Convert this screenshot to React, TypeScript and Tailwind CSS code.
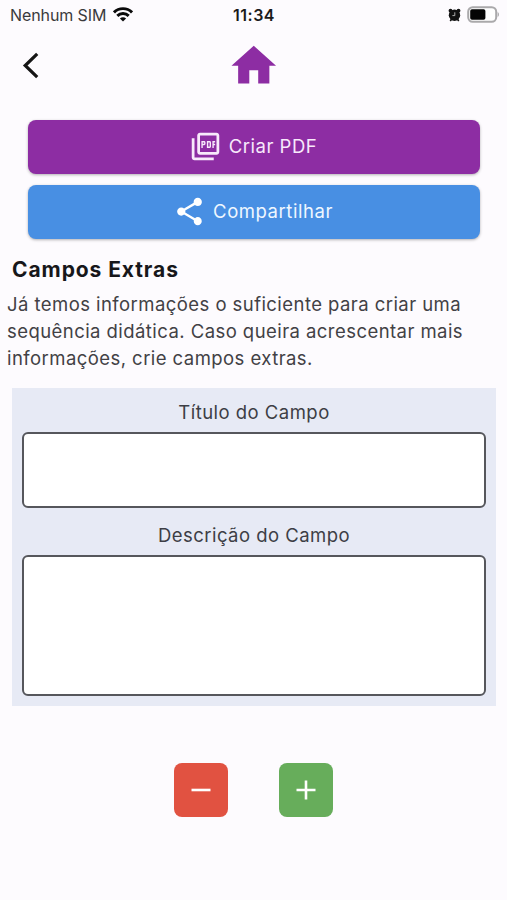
import React, { useState } from 'react';
import { MdHome, MdOutlinePictureAsPdf, MdShare } from 'react-icons/md';

interface CampoProps {
  label: string;
  value: string;
  fieldClass: string;
  labelClass: string;
  onChange: (value: string) => void;
}

const Campo: React.FC<CampoProps> = ({ label, value, fieldClass, labelClass, onChange }) => (
  <label className="block">
    <span className={`block text-center text-[18.5px] leading-[27px] tracking-[0.47px] text-[#3d3e45] ${labelClass}`}>
      {label}
    </span>
    <textarea
      className={`block w-full resize-none rounded-[6px] border-2 border-[#56575c] bg-white p-3 text-[18px] outline-none ${fieldClass}`}
      value={value}
      onChange={e => onChange(e.target.value)}
    />
  </label>
);

const StatusBar: React.FC = () => (
  <div className="grid h-[30px] grid-cols-3 items-center pr-[8px] pl-[10px]">
    <div className="flex items-center gap-[7px] text-[16px] tracking-[-0.1px] text-[#3a3a3c]">
      <span className="whitespace-nowrap">Nenhum SIM</span>
      <svg width="20" height="15" viewBox="0 0 20 15" fill="none" stroke="#0a0a0a" strokeWidth="2.9" className="-mt-[2px]">
        <path d="M1 5.4C6 .4 14 .4 19 5.4" />
        <path d="M4.3 8.9c3.2-3.2 8.2-3.2 11.4 0" />
        <path d="M10 14.6 6.9 11.5c1.8-1.6 4.4-1.6 6.2 0Z" fill="#0a0a0a" stroke="none" />
      </svg>
    </div>
    <span className="pr-[1px] text-center text-[16px] font-semibold tracking-[0.5px] text-[#1a1a1a]">11:34</span>
    <div className="flex items-center justify-end gap-[6px]">
      <svg width="13" height="14" viewBox="0 0 13 14" className="-mt-[1px]">
        <circle cx="2.5" cy="2.7" r="1.9" fill="#111" />
        <circle cx="10.5" cy="2.7" r="1.9" fill="#111" />
        <path d="m2.2 13 2-2.6M10.8 13l-2-2.6" stroke="#111" strokeWidth="1.6" />
        <circle cx="6.5" cy="7.3" r="5.7" fill="#111" />
        <path d="M6.8 4.3v3.3H4.4" fill="none" stroke="#bbb" strokeWidth="0.9" />
      </svg>
      <svg width="32" height="17" viewBox="0 0 32 17" className="-mt-[2px]">
        <rect x="1.2" y="1.2" width="28" height="14.6" rx="4.5" fill="#fff" stroke="#aaa9ab" strokeWidth="2" />
        <rect x="3.2" y="3.2" width="15.2" height="10.6" rx="1.8" fill="#050505" />
        <path d="M30.6 6v5c1.8-.8 1.8-4.2 0-5Z" fill="#aaa9ab" />
      </svg>
    </div>
  </div>
);

const App: React.FC = () => {
  const [titulo, setTitulo] = useState('');
  const [descricao, setDescricao] = useState('');

  return (
    <div className="h-[900px] w-[507px] overflow-hidden bg-[#fdfbfe] font-['Inter','Liberation_Sans',sans-serif]">
      <StatusBar />

      <header className="grid h-[89.5px] grid-cols-3 items-start px-[22px]">
        <button className="mt-[22px] w-[18px]" aria-label="Voltar">
          <svg width="18" height="27" viewBox="0 0 18 27" fill="none" stroke="#151515" strokeWidth="3.2">
            <path d="M15.2 1.8 3.2 13.5l12 11.7" />
          </svg>
        </button>
        <MdHome className="mt-[9px] justify-self-center text-[#8d2da3]" size={53.5} />
      </header>

      <div className="flex flex-col gap-[11px] pr-[27px] pl-[28px]">
        <button className="flex h-[54px] items-center justify-center gap-[7px] rounded-[8px] bg-[#8d2da3] pr-[2px] text-[18.5px] tracking-[0.5px] text-[#f8e9fb] shadow-[0_1px_3px_rgba(0,0,0,0.3)]">
          <MdOutlinePictureAsPdf size={33} />
          <span>Criar PDF</span>
        </button>
        <button className="flex h-[54px] items-center justify-center gap-[7px] rounded-[8px] bg-[#488fe3] pr-[2px] text-[18.5px] tracking-[0.55px] text-[#eff7ff] shadow-[0_1px_3px_rgba(0,0,0,0.3)]">
          <MdShare size={33} className="text-white" />
          <span>Compartilhar</span>
        </button>
      </div>

      <h1 className="mt-[17.5px] ml-[12px] text-[21px] leading-[28px] font-bold tracking-[0.92px] text-[#17171a]">
        Campos Extras
      </h1>
      <p className="mt-[7px] ml-[7px] text-[18.5px] leading-[27px] tracking-[0.44px] whitespace-nowrap text-[#424145]">
        Já temos informações o suficiente para criar uma
        <br />
        sequência didática. Caso queira acrescentar mais
        <br />
        informações, crie campos extras.
      </p>

      <section className="mt-[16px] mr-[11px] ml-[12px] h-[318px] bg-[#e7eaf5] px-[10px] pt-[11px]">
        <Campo label="Título do Campo" value={titulo} onChange={setTitulo} labelClass="mb-[6px]" fieldClass="h-[76px]" />
        <Campo label="Descrição do Campo" value={descricao} onChange={setDescricao} labelClass="mt-[14px] mb-[6px]" fieldClass="h-[141px]" />
      </section>

      <div className="mt-[56.5px] flex justify-center gap-[51px]">
        <button className="flex h-[54px] w-[54px] items-center justify-center rounded-[8px] bg-[#e15241]" aria-label="Remover campo">
          <svg width="20" height="20" viewBox="0 0 20 20" stroke="#fff" strokeWidth="2.6">
            <path d="M.5 10h19" />
          </svg>
        </button>
        <button className="flex h-[54px] w-[54px] items-center justify-center rounded-[8px] bg-[#67ad5b]" aria-label="Adicionar campo">
          <svg width="20" height="20" viewBox="0 0 20 20" stroke="#fff" strokeWidth="2.6">
            <path d="M.5 10h19M10 .5v19" />
          </svg>
        </button>
      </div>
    </div>
  );
};

export default App;
